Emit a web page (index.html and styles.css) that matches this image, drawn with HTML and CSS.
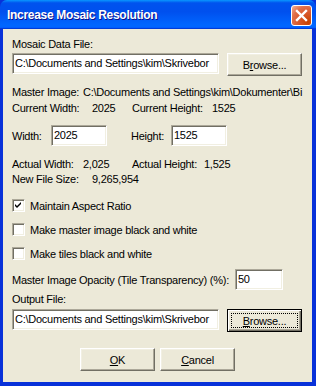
FILE: index.html
```html
<!DOCTYPE html>
<html>
<head>
    <link rel="stylesheet" href="styles.css">
</head>
<body>
    <div class="window">
        <div class="title-bar">
            <span class="title">Increase Mosaic Resolution</span>
            <div class="close-btn">
                <svg width="21" height="21" viewBox="0 0 21 21">
                    <path d="M6 6 L15 15 M15 6 L6 15" stroke="#fff" stroke-width="2.4" stroke-linecap="square"/>
                </svg>
            </div>
        </div>
        <div class="client">
            <div class="line first">Mosaic Data File:</div>
            <div class="file-row">
                <div class="edit path">C:\Documents and Settings\kim\Skrivebor</div>
                <div class="btn">B<u>r</u>owse...</div>
            </div>

            <div class="line gap-10"><span class="k w71">Master Image:</span>C:\Documents and Settings\kim\Dokumenter\Bi</div>
            <div class="line gap-3"><span class="k w80">Current Width:</span><span class="k w40">2025</span><span class="k w80">Current Height:</span>1525</div>

            <div class="size-row">
                <span class="k w39">Width:</span>
                <div class="edit num">2025</div>
                <span class="k w40 left-24">Height:</span>
                <div class="edit num">1525</div>
            </div>

            <div class="line gap-12"><span class="k w71">Actual Width:</span><span class="k w49">2,025</span><span class="k w72">Actual Height:</span>1,525</div>
            <div class="line gap-2"><span class="k w80">New File Size:</span>9,265,954</div>

            <div class="check first-check">
                <span class="box checked">
                    <svg width="11" height="11" viewBox="0 0 11 11">
                        <path d="M2 4 L4 6 L8 2 L8 4 L4 8 L2 6 Z" fill="#000"/>
                    </svg>
                </span>
                Maintain Aspect Ratio
            </div>
            <div class="check"><span class="box"></span>Make master image black and white</div>
            <div class="check"><span class="box"></span>Make tiles black and white</div>

            <div class="opacity-row">
                <span class="k w223">Master Image Opacity (Tile Transparency) (%):</span>
                <div class="edit small">50</div>
            </div>

            <div class="line gap-3">Output File:</div>
            <div class="file-row out">
                <div class="edit path">C:\Documents and Settings\kim\Skrivebor</div>
                <div class="btn default"><span class="focus"><u>B</u>rowse...</span></div>
            </div>

            <div class="actions">
                <div class="btn"><u>O</u>K</div>
                <div class="btn"><u>C</u>ancel</div>
            </div>
        </div>
    </div>
</body>
</html>
```

FILE: styles.css
```css
body {
    margin: 0;
    background: #ECE9D8;
}

.window {
    width: 316px;
    height: 386px;
    display: flex;
    flex-direction: column;
    background: #0831D9;
    font-family: "Liberation Sans", Arial, sans-serif;
    font-size: 11px;
    color: #000;
    overflow: hidden;
}

.title-bar {
    height: 29px;
    flex-shrink: 0;
    display: flex;
    align-items: flex-start;
    justify-content: space-between;
    padding: 0 4px 0 7px;
    border-radius: 7px 7px 0 0;
    background: linear-gradient(180deg, #0997FF 0%, #0053EE 10%, #0050EE 40%, #0066FF 85%, #0066FF 92%, #005BFF 95%, #003DD7 97%, #003DD7 100%);
}

.title {
    margin-top: 8px;
    color: #fff;
    font-weight: bold;
    font-size: 12px;
    letter-spacing: -0.3px;
    text-shadow: 1px 1px #0F1089;
}

.close-btn {
    margin-top: 5px;
    width: 21px;
    height: 21px;
    box-sizing: border-box;
    border: 1px solid #fff;
    border-radius: 3px;
    background: radial-gradient(circle at 85% 85%, #C74200 0%, #DA5A2E 45%, #E0704A 70%, #F3B39C 100%);
    display: flex;
    align-items: center;
    justify-content: center;
}

.close-btn svg {
    display: block;
    margin: -1px;
}

.client {
    flex: 1;
    margin: 0 4px 4px 3px;
    padding-left: 9px;
    background: #ECE9D8;
    display: flex;
    flex-direction: column;
    overflow: hidden;
    letter-spacing: -0.25px;
}

.line {
    height: 13px;
    line-height: 13px;
    white-space: nowrap;
    display: flex;
}

.first { margin-top: 9px; }
.gap-2 { margin-top: 2px; }
.gap-3 { margin-top: 3px; }
.gap-10 { margin-top: 10px; }
.gap-12 { margin-top: 12px; }

.k {
    display: inline-block;
    flex-shrink: 0;
}

.w39 { width: 39px; }
.w40 { width: 40px; }
.w49 { width: 49px; }
.w71 { width: 71px; }
.w72 { width: 72px; }
.w80 { width: 80px; }
.w223 { width: 223px; }
.left-24 { margin-left: 24px; }

.file-row {
    margin-top: 2px;
    display: flex;
    gap: 8px;
}

.file-row.out {
    margin-top: 3px;
}

.edit {
    box-sizing: border-box;
    height: 21px;
    background: #fff;
    border: 1px solid;
    border-color: #ACA899 #fff #fff #ACA899;
    box-shadow: inset 1px 1px #716F64, inset -1px -1px #F1EFE2;
    padding: 0 2px;
    line-height: 19px;
    white-space: nowrap;
    overflow: hidden;
}

.edit.path { width: 207px; }
.edit.num { width: 56px; }
.edit.small { width: 48px; }

.btn {
    box-sizing: border-box;
    width: 75px;
    height: 23px;
    background: #ECE9D8;
    border: 1px solid;
    border-color: #fff #716F64 #716F64 #fff;
    box-shadow: inset -1px -1px #ACA899, inset 1px 1px #F1EFE2;
    display: flex;
    align-items: center;
    justify-content: center;
}

.btn.default {
    border-color: #000;
    box-shadow: inset 1px 1px #fff, inset -1px -1px #716F64, inset -2px -2px #ACA899;
    padding: 3px;
}

.focus {
    flex: 1;
    align-self: stretch;
    border: 1px dotted #000;
    display: flex;
    align-items: center;
    justify-content: center;
}

.size-row {
    margin-top: 10px;
    height: 21px;
    display: flex;
    align-items: center;
}

.check {
    margin-top: 11px;
    height: 13px;
    display: flex;
    align-items: center;
    gap: 5px;
    white-space: nowrap;
}

.first-check { margin-top: 13px; }

.box {
    box-sizing: border-box;
    width: 13px;
    height: 13px;
    background: #fff;
    border: 1px solid;
    border-color: #ACA899 #fff #fff #ACA899;
    box-shadow: inset 1px 1px #716F64, inset -1px -1px #F1EFE2;
    display: flex;
    align-items: center;
    justify-content: center;
}

.box svg {
    display: block;
}

.opacity-row {
    margin-top: 9px;
    height: 21px;
    display: flex;
    align-items: center;
    white-space: nowrap;
}

.actions {
    margin-top: 16px;
    margin-left: -9px;
    display: flex;
    justify-content: center;
    gap: 5px;
}
```
